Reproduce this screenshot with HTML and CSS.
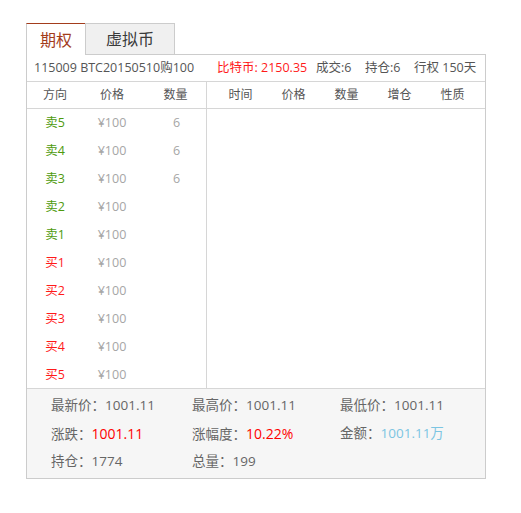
FILE: index.html
```html
<!DOCTYPE html>
<html lang="zh-CN">
<head>
<meta charset="utf-8">
<title>期权</title>
<link rel="stylesheet" href="styles.css">
</head>
<body>
<div class="wrap">
  <div class="tabs">
    <div class="tab tab-active">期权</div>
    <div class="tab">虚拟币</div>
  </div>
  <div class="panel">
    <div class="info">
      <span class="info-code">115009 BTC20150510购100</span>
      <span class="info-price">比特币: 2150.35</span>
      <span class="info-item">成交:6</span>
      <span class="info-item">持仓:6</span>
      <span class="info-last">行权 150天</span>
    </div>
    <div class="table">
      <div class="side side-left">
        <div class="thead thead-left">
          <span>方向</span><span>价格</span><span>数量</span>
        </div>
        <div class="tbody">
          <div class="row"><span class="sell">卖5</span><span class="price">¥100</span><span class="qty">6</span></div>
          <div class="row"><span class="sell">卖4</span><span class="price">¥100</span><span class="qty">6</span></div>
          <div class="row"><span class="sell">卖3</span><span class="price">¥100</span><span class="qty">6</span></div>
          <div class="row"><span class="sell">卖2</span><span class="price">¥100</span><span class="qty"></span></div>
          <div class="row"><span class="sell">卖1</span><span class="price">¥100</span><span class="qty"></span></div>
          <div class="row"><span class="buy">买1</span><span class="price">¥100</span><span class="qty"></span></div>
          <div class="row"><span class="buy">买2</span><span class="price">¥100</span><span class="qty"></span></div>
          <div class="row"><span class="buy">买3</span><span class="price">¥100</span><span class="qty"></span></div>
          <div class="row"><span class="buy">买4</span><span class="price">¥100</span><span class="qty"></span></div>
          <div class="row"><span class="buy">买5</span><span class="price">¥100</span><span class="qty"></span></div>
        </div>
      </div>
      <div class="side side-right">
        <div class="thead thead-right">
          <span>时间</span><span>价格</span><span>数量</span><span>增仓</span><span>性质</span>
        </div>
        <div class="tbody"></div>
      </div>
    </div>
    <div class="stats">
      <div class="stat">最新价：1001.11</div>
      <div class="stat">最高价：1001.11</div>
      <div class="stat">最低价：1001.11</div>
      <div class="stat">涨跌：<span class="up">1001.11</span></div>
      <div class="stat">涨幅度：<span class="up">10.22%</span></div>
      <div class="stat">金额：<span class="amount">1001.11万</span></div>
      <div class="stat">持仓：1774</div>
      <div class="stat">总量：199</div>
    </div>
  </div>
</div>
</body>
</html>
```
FILE: styles.css
```css
* { box-sizing: border-box; }

html, body {
  margin: 0;
  padding: 0;
  background: #ffffff;
}

body {
  font-family: "Open Sans", "Noto Sans CJK SC", sans-serif;
  color: #555555;
  font-size: 12px;
}

.wrap {
  padding: 23px 0 0 26px;
  width: 486px;
}

.tabs {
  display: flex;
  height: 32px;
  margin-bottom: -1px;
  position: relative;
  z-index: 1;
}

.tab {
  display: flex;
  align-items: center;
  justify-content: center;
  font-size: 16px;
  line-height: 1;
}

.tab-active {
  width: 59px;
  background: #ffffff;
  color: #a33c1c;
  border-top: 1px solid #a33c1c;
  border-left: 1px solid #cccccc;
}

.tab:not(.tab-active) {
  width: 90px;
  background: #f0f0f0;
  color: #3a3a3a;
  border: 1px solid #cccccc;
}

.panel {
  width: 460px;
  border: 1px solid #cccccc;
}

.info {
  display: flex;
  align-items: center;
  height: 27px;
  border-bottom: 1px solid #d6d6d6;
  padding-left: 7px;
  line-height: 1;
  font-size: 12.5px;
  white-space: nowrap;
}

.info-code { width: 183px; }
.info-price { width: 99px; color: #ff1a1a; }
.info-item { width: 49px; }

.table {
  display: grid;
  grid-template-columns: 180px 1fr;
}

.side-left {
  border-right: 1px solid #d6d6d6;
}

.thead {
  display: grid;
  align-items: center;
  height: 27px;
  border-bottom: 1px solid #d6d6d6;
  text-align: center;
  line-height: 1;
}

.thead-left {
  grid-template-columns: 56px 58px 1fr;
}

.thead-left span:last-child { padding-left: 4px; }

.thead-right {
  grid-template-columns: 7px repeat(5, 53px) 1fr;
}

.thead-right span:first-child { grid-column: 2; }

.tbody {
  height: 279px;
  overflow: hidden;
}

.row {
  display: grid;
  grid-template-columns: 56px 58px 1fr;
  align-items: center;
  height: 28px;
  text-align: center;
  font-size: 12.5px;
  line-height: 1;
}

.row .qty { padding-left: 6px; }

.sell { color: #4e9a0c; }
.buy { color: #ff1a1a; }
.price, .qty { color: #a6a6a6; }

.stats {
  display: grid;
  grid-template-columns: 141px 148px 1fr;
  grid-auto-rows: 28px;
  align-items: center;
  height: 90px;
  padding: 3px 0 0 24px;
  background: #f6f6f6;
  border-top: 1px solid #d6d6d6;
  font-size: 13.5px;
  line-height: 1;
  color: #666666;
}

.stat { white-space: nowrap; }

.up { color: #ff0000; font-size: 14px; }
.amount { color: #7cc5e2; }
```
